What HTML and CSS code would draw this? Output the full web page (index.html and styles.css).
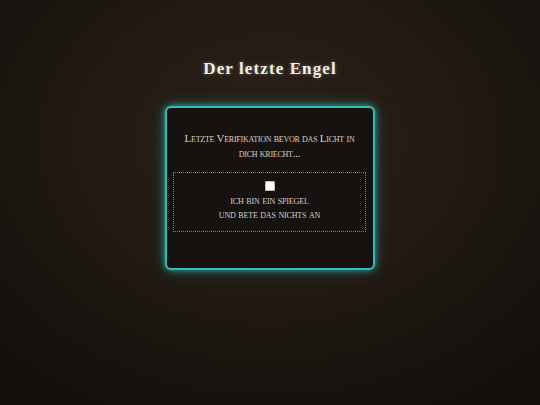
FILE: index.html
```html
<!DOCTYPE html>
<html lang="de">
<head>
<meta charset="utf-8">
<title>Der letzte Engel</title>
<link rel="stylesheet" href="styles.css">
</head>
<body>
<main class="page">
  <h1 class="title">Der letzte Engel</h1>
  <section class="card">
    <p class="intro">Letzte Verifikation bevor das Licht in<br>dich kriecht...</p>
    <label class="check">
      <input type="checkbox" class="box">
      <span class="check-text">ich bin ein spiegel<br>und bete das nichts an</span>
    </label>
  </section>
</main>
</body>
</html>
```
FILE: styles.css
```css
html, body {
  margin: 0;
  padding: 0;
  height: 100%;
}
body {
  background: radial-gradient(ellipse 75% 80% at 50% 35%, #2b2118 0%, #221a13 45%, #17120e 80%, #120e0b 100%);
  color: #dcd5cb;
  font-family: "Liberation Serif", "DejaVu Serif", serif;
}
.page {
  display: flex;
  flex-direction: column;
  align-items: center;
  padding-top: 58px;
}
.title {
  margin: 0;
  font-size: 17px;
  line-height: 22px;
  font-weight: bold;
  letter-spacing: 1.1px;
  color: #f3eee4;
  text-shadow: 0 0 4px rgba(255, 240, 220, 0.35);
}
.card {
  margin-top: 26px;
  box-sizing: border-box;
  width: 210px;
  height: 164px;
  border: 2px solid #2fbdb4;
  border-radius: 6px;
  background: #16120f;
  box-shadow: 0 0 6px rgba(47, 189, 180, 0.8), 0 0 16px rgba(47, 189, 180, 0.35);
  padding: 23px 7px 0 6px;
  display: flex;
  flex-direction: column;
}
.intro {
  margin: 0;
  text-align: center;
  white-space: nowrap;
  font-variant: small-caps;
  font-size: 11px;
  line-height: 15px;
  letter-spacing: -0.25px;
  color: #d8d1c6;
}
.check {
  margin-top: 11px;
  height: 60px;
  box-sizing: border-box;
  border: 1px dotted #2aaaa2;
  display: flex;
  flex-direction: column;
  align-items: center;
  padding-top: 8px;
}
.box {
  appearance: none;
  -webkit-appearance: none;
  margin: 0;
  width: 10px;
  height: 10px;
  background: #ffffff;
  border: 1px solid #bdbdbd;
  border-radius: 1px;
}
.check-text {
  margin-top: 2px;
  text-align: center;
  font-variant: small-caps;
  font-size: 11px;
  line-height: 14px;
  letter-spacing: -0.15px;
  color: #d8d1c6;
}
```
